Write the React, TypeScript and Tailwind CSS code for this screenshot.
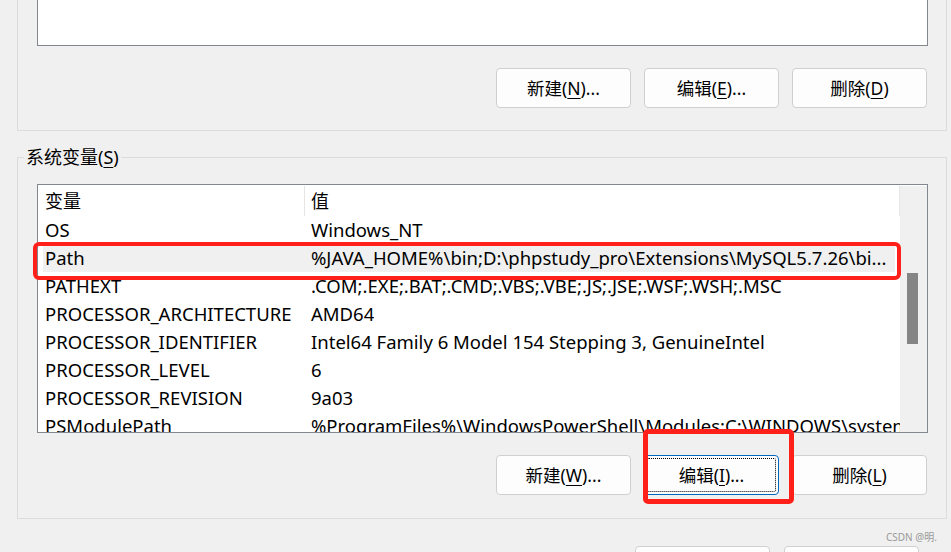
import React from "react";

const font = {
  fontFamily: '"Noto Sans", "Noto Sans CJK SC", sans-serif',
};

function Btn({
  label,
  k,
  suffix,
  focused,
}: {
  label: string;
  k: string;
  suffix: string;
  focused?: boolean;
}) {
  return (
    <div
      className={
        "relative flex h-[40px] w-[135px] items-center justify-center rounded-[4px] border bg-[#fdfdfd] text-[17.5px] text-black " +
        (focused ? "border-[#0067c0]" : "border-[#d0d0d0]")
      }
    >
      {focused && (
        <span className="absolute inset-[2px] rounded-[2px] border border-dotted border-black" />
      )}
      <span>
        {label}(<span className="underline underline-offset-[3px]">{k}</span>){suffix}
      </span>
    </div>
  );
}

const rows: [string, string][] = [
  ["OS", "Windows_NT"],
  ["Path", "%JAVA_HOME%\\bin;D:\\phpstudy_pro\\Extensions\\MySQL5.7.26\\bi..."],
  ["PATHEXT", ".COM;.EXE;.BAT;.CMD;.VBS;.VBE;.JS;.JSE;.WSF;.WSH;.MSC"],
  ["PROCESSOR_ARCHITECTURE", "AMD64"],
  ["PROCESSOR_IDENTIFIER", "Intel64 Family 6 Model 154 Stepping 3, GenuineIntel"],
  ["PROCESSOR_LEVEL", "6"],
  ["PROCESSOR_REVISION", "9a03"],
  ["PSModulePath", "%ProgramFiles%\\WindowsPowerShell\\Modules;C:\\WINDOWS\\system32\\WindowsPowerShell"],
];

export default function App() {
  return (
    <div
      className="relative h-[552px] w-[951px] overflow-hidden bg-[#f0f0f0] text-black"
      style={font}
    >
      {/* Top group (user variables) */}
      <div className="ml-[17px] flex h-[131px] w-[930px] flex-col border-x border-b border-[#dcdcdc]">
        <div className="ml-[19px] h-[46px] w-[891px] border-x border-b border-[#828790] bg-white" />
        <div className="mr-[19px] mt-[22px] flex justify-end gap-[13px]">
          <Btn label="新建" k="N" suffix="..." />
          <Btn label="编辑" k="E" suffix="..." />
          <Btn label="删除" k="D" suffix="" />
        </div>
      </div>

      {/* System variables group */}
      <div className="relative ml-[17px] mt-[26px] flex h-[362px] w-[930px] flex-col border border-[#dcdcdc]">
        <div className="absolute left-[6px] top-[-13px] bg-[#f0f0f0] px-[2px] text-[18px] leading-[24px]">
          系统变量(<span className="underline underline-offset-[3px]">S</span>)
        </div>

        <div className="ml-[19px] mt-[26px] flex h-[249px] w-[891px] border border-[#828790] bg-white pt-[1px]">
          <div className="flex w-[862px] flex-col overflow-hidden text-[18.5px]">
            <div className="flex h-[30px] shrink-0 text-[18px]">
              <div className="flex w-[267px] items-center border-r border-[#e5e5e5] pl-[7px]">
                变量
              </div>
              <div className="flex flex-1 items-center border-r border-[#e5e5e5] pl-[6px]">
                值
              </div>
            </div>
            {rows.map(([n, v]) =>
              n === "Path" ? (
                <div
                  key={n}
                  className="mx-[5px] flex h-[28px] w-[852px] shrink-0 items-center whitespace-nowrap bg-[#f0f0f0]"
                >
                  <div className="w-[262px] shrink-0 overflow-hidden pl-[2px]">{n}</div>
                  <div className="overflow-hidden pl-[6px]">{v}</div>
                </div>
              ) : (
                <div
                  key={n}
                  className="flex h-[28px] shrink-0 items-center whitespace-nowrap"
                >
                  <div className="w-[267px] shrink-0 overflow-hidden pl-[7px]">{n}</div>
                  <div className="overflow-hidden pl-[6px]">{v}</div>
                </div>
              )
            )}
          </div>
          <div className="flex w-[27px] flex-col bg-[#f0f0f0]">
            <div className="ml-[7px] mt-[87px] h-[71px] w-[11px] bg-[#858585]" />
          </div>
        </div>

        <div className="mr-[19px] mt-[22px] flex justify-end gap-[13px]">
          <Btn label="新建" k="W" suffix="..." />
          <Btn label="编辑" k="I" suffix="..." focused />
          <Btn label="删除" k="L" suffix="" />
        </div>
      </div>

      {/* Bottom dialog buttons (partially visible) */}
      <div className="mt-[27px] flex justify-end gap-[14px] pr-[32px]">
        <div className="h-[40px] w-[135px] rounded-[4px] border border-[#d0d0d0] bg-[#fdfdfd]" />
        <div className="h-[40px] w-[135px] rounded-[4px] border border-[#d0d0d0] bg-[#fdfdfd]" />
      </div>

      {/* Watermark */}
      <div className="absolute left-[886px] top-[530px] text-[10px] leading-[14px] text-[#9a9a9a]">
        CSDN @明.
      </div>

      {/* Red annotation boxes */}
      <div className="pointer-events-none absolute left-[33px] top-[242px] h-[38px] w-[868px] rounded-[6px] border-[4px] border-[#ff2119]" />
      <div className="pointer-events-none absolute left-[643px] top-[429px] h-[75px] w-[151px] rounded-[5px] border-[5px] border-[#ff2119]" />
    </div>
  );
}
